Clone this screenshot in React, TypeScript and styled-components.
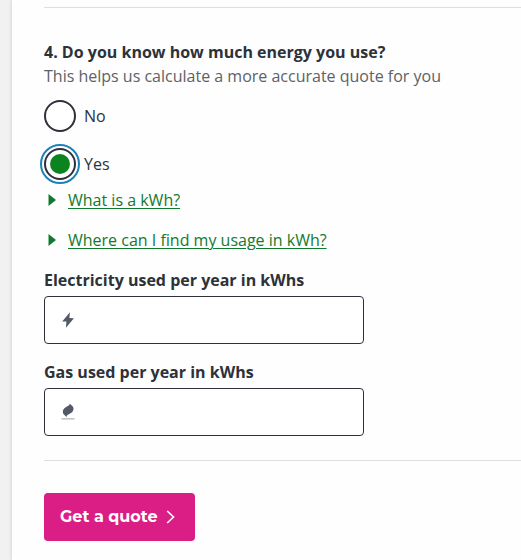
import React, { useState } from "react";
import styled, { createGlobalStyle } from "styled-components";

const ink = "#2c3238";
const outline = "#30303c";
const green = "#117a2e";

const GlobalStyle = createGlobalStyle`
  *, *::before, *::after { box-sizing: border-box; }
  body {
    margin: 0;
    background: #f1f1f1;
    color: ${ink};
    font-family: "Open Sans", sans-serif;
    font-size: 16px;
    line-height: 24px;
  }
`;

const Page = styled.main`
  min-height: 100vh;
  padding-left: 12px;
  overflow: hidden;
`;

const Card = styled.form`
  min-height: 100vh;
  padding: 7px 0 19px 32px;
  background: #fefefe;
  box-shadow: 0 0 4px rgba(0, 0, 0, 0.16);
`;

const Divider = styled.hr`
  height: 1px;
  margin: 0;
  border: 0;
  background: #dedfe0;
`;

const Question = styled.fieldset`
  margin: 32px 0 0;
  padding: 0;
  border: 0;
  min-width: 0;
`;

const Legend = styled.legend`
  padding: 0;
  font-weight: 700;
`;

const Hint = styled.p`
  margin: 0 0 12px;
  color: #5c6266;
`;

const Choices = styled.div`
  display: flex;
  flex-direction: column;
  align-items: flex-start;
  gap: 16px;
`;

const Choice = styled.label`
  display: flex;
  align-items: center;
  gap: 8px;
  cursor: pointer;
`;

const Radio = styled.input`
  appearance: none;
  flex: none;
  display: grid;
  place-items: center;
  width: 32px;
  height: 32px;
  margin: 0;
  border: 2px solid ${outline};
  border-radius: 50%;
  background: #fff;
  cursor: pointer;

  &:checked {
    outline: 2px solid #1c83ba;
    outline-offset: 2px;
  }
  &:checked::before {
    content: "";
    width: 20px;
    height: 20px;
    border-radius: 50%;
    background: #0b8420;
  }
`;

const HelpList = styled.div`
  display: grid;
  gap: 16px;
  margin: 8px 0 16px;
`;

const Summary = styled.summary`
  display: flex;
  align-items: center;
  gap: 12px;
  width: fit-content;
  padding-left: 4px;
  color: ${green};
  cursor: pointer;
  list-style: none;
  &::-webkit-details-marker { display: none; }
`;

const SummaryText = styled.span`
  text-decoration: underline;
  text-decoration-thickness: 1px;
  text-underline-offset: 2px;
`;

const HelpText = styled.p`
  margin: 4px 24px;
`;

const Field = styled.div`
  display: grid;
  gap: 4px;
  max-width: 320px;
  margin-bottom: 16px;
`;

const FieldLabel = styled.label`
  font-weight: 700;
`;

const InputFrame = styled.div`
  display: flex;
  align-items: center;
  gap: 8px;
  height: 48px;
  padding: 0 16px;
  border: 1px solid ${outline};
  border-radius: 4px;
  background: #fff;
`;

const TextInput = styled.input`
  flex: 1;
  min-width: 0;
  height: 100%;
  padding: 0;
  border: 0;
  outline: 0;
  background: transparent;
  color: inherit;
  font: inherit;
`;

const Actions = styled.div`
  padding-top: 32px;
`;

const Submit = styled.button`
  display: inline-flex;
  align-items: center;
  gap: 8px;
  height: 48px;
  padding: 0 20px 0 16px;
  border: 0;
  border-radius: 4px;
  background: #db1d86;
  color: #fff;
  font: 700 16px/24px Montserrat, Inter, sans-serif;
  cursor: pointer;
`;

const FormEnd = styled.div`
  margin-top: 24px;
`;

const Triangle = () => (
  <svg width="8" height="12" viewBox="0 0 8 12" aria-hidden="true">
    <path d="M0.5 0 8 6 0.5 12Z" fill={green} />
  </svg>
);

const BoltIcon = () => (
  <svg width="14" height="16" viewBox="0 0 14 16" aria-hidden="true">
    <path d="M8.9 0.2 1.2 9.4 5.4 9.6 5 15.8 12.9 6.3 8.4 6.1Z" fill="#535966" />
  </svg>
);

const FlameIcon = () => (
  <svg width="14" height="18" viewBox="0 0 14 18" aria-hidden="true">
    <path
      d="M8.8 0.7C8.6 2.7 6.6 3 4.4 4.4 1.4 6.3 1.1 9.7 3.2 11.8L5.5 14C5.6 11.9 7.7 11.5 9.9 10.1 12.9 8.1 13.3 4.9 11.3 2.9Z"
      fill="#535966"
    />
    <path d="M0.5 15.8H13.5" stroke="#b9bcc1" strokeWidth="1.4" />
  </svg>
);

const Chevron = () => (
  <svg width="9" height="14" viewBox="0 0 9 14" aria-hidden="true">
    <path d="M1.2 1 7.5 7 1.2 13" fill="none" stroke="#fff" strokeWidth="1.7" />
  </svg>
);

type HelpProps = { title: string; children: React.ReactNode };

const Help = ({ title, children }: HelpProps) => {
  const [open, setOpen] = useState(false);

  return (
    <details onToggle={(event) => setOpen(event.currentTarget.open)}>
      <Summary>
        <Triangle />
        <SummaryText>{title}</SummaryText>
      </Summary>
      {open && <HelpText>{children}</HelpText>}
    </details>
  );
};

type UsageProps = { id: string; label: string; icon: React.ReactNode };

const UsageField = ({ id, label, icon }: UsageProps) => (
  <Field>
    <FieldLabel htmlFor={id}>{label}</FieldLabel>
    <InputFrame>
      {icon}
      <TextInput id={id} name={id} type="text" inputMode="numeric" />
    </InputFrame>
  </Field>
);

export default function App() {
  const [knows, setKnows] = useState("Yes");

  return (
    <>
      <GlobalStyle />
      <Page>
        <Card onSubmit={(event) => event.preventDefault()}>
          <Divider />
          <Question>
            <Legend>4. Do you know how much energy you use?</Legend>
            <Hint>This helps us calculate a more accurate quote for you</Hint>
            <Choices>
              {["No", "Yes"].map((option) => (
                <Choice key={option}>
                  <Radio
                    type="radio"
                    name="knows-usage"
                    value={option}
                    checked={knows === option}
                    onChange={() => setKnows(option)}
                  />
                  {option}
                </Choice>
              ))}
            </Choices>
          </Question>
          <HelpList>
            <Help title="What is a kWh?">A kilowatt hour is a unit of energy.</Help>
            <Help title="Where can I find my usage in kWh?">Look on your energy bill.</Help>
          </HelpList>
          <UsageField id="electricity" label="Electricity used per year in kWhs" icon={<BoltIcon />} />
          <UsageField id="gas" label="Gas used per year in kWhs" icon={<FlameIcon />} />
          <FormEnd>
            <Divider />
            <Actions>
              <Submit type="submit">
                Get a quote
                <Chevron />
              </Submit>
            </Actions>
          </FormEnd>
        </Card>
      </Page>
    </>
  );
}
